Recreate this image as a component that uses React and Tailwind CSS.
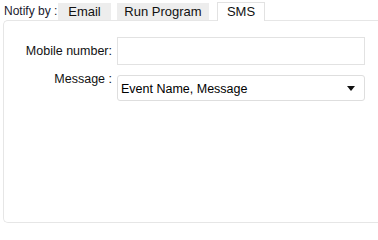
export default function App() {
  return (
    <div className="w-[378px] h-[228px] overflow-hidden bg-white text-[12px] text-[#222] font-['Liberation_Sans',Arial,sans-serif]">
      {/* tab strip */}
      <div className="flex items-end h-[20px] pl-[4px]">
        <span className="self-center mt-[1px] w-[54px] whitespace-nowrap text-[12px] text-[#1a1a2e]">Notify by :</span>
        <div className="w-[53px] h-[17px] bg-[#ededed] flex items-center justify-center text-[13px] text-[#111]">Email</div>
        <div className="ml-[6px] w-[92px] h-[17px] bg-[#ededed] flex items-center justify-center text-[13px] text-[#111]">Run Program</div>
        <div className="ml-[8px] w-[48px] h-[19px] mb-[-1px] relative z-10 bg-white border border-b-0 border-[#e2e2e2] flex items-center justify-center text-[13px] text-[#111]">SMS</div>
      </div>

      {/* panel */}
      <div className="ml-[3px] w-[390px] h-[203px] border border-r-0 border-[#e6e6e6] rounded-l-[5px] pt-[16px]">
        <div className="flex items-center">
          <label className="w-[110px] pr-[2px] whitespace-nowrap text-right text-[12.5px] text-[#111]">Mobile number:</label>
          <input className="ml-[3px] w-[248px] h-[28px] border border-[#e2e2e2] bg-white outline-none" />
        </div>
        <div className="flex items-start mt-[10px]">
          <label className="w-[110px] pr-[2px] whitespace-nowrap text-right text-[12.5px] text-[#111] -mt-[5px]">Message :</label>
          <div className="ml-[3px] w-[248px] h-[26px] border border-[#dedede] rounded-[3px] flex items-center justify-between pl-[3px] pr-[9px]">
            <span className="pt-[3px] text-[12.5px] text-black">Event Name, Message</span>
            <svg width="8" height="5" viewBox="0 0 8 5">
              <path d="M0 0h8L4 5z" fill="#111" />
            </svg>
          </div>
        </div>
      </div>
    </div>
  );
}
